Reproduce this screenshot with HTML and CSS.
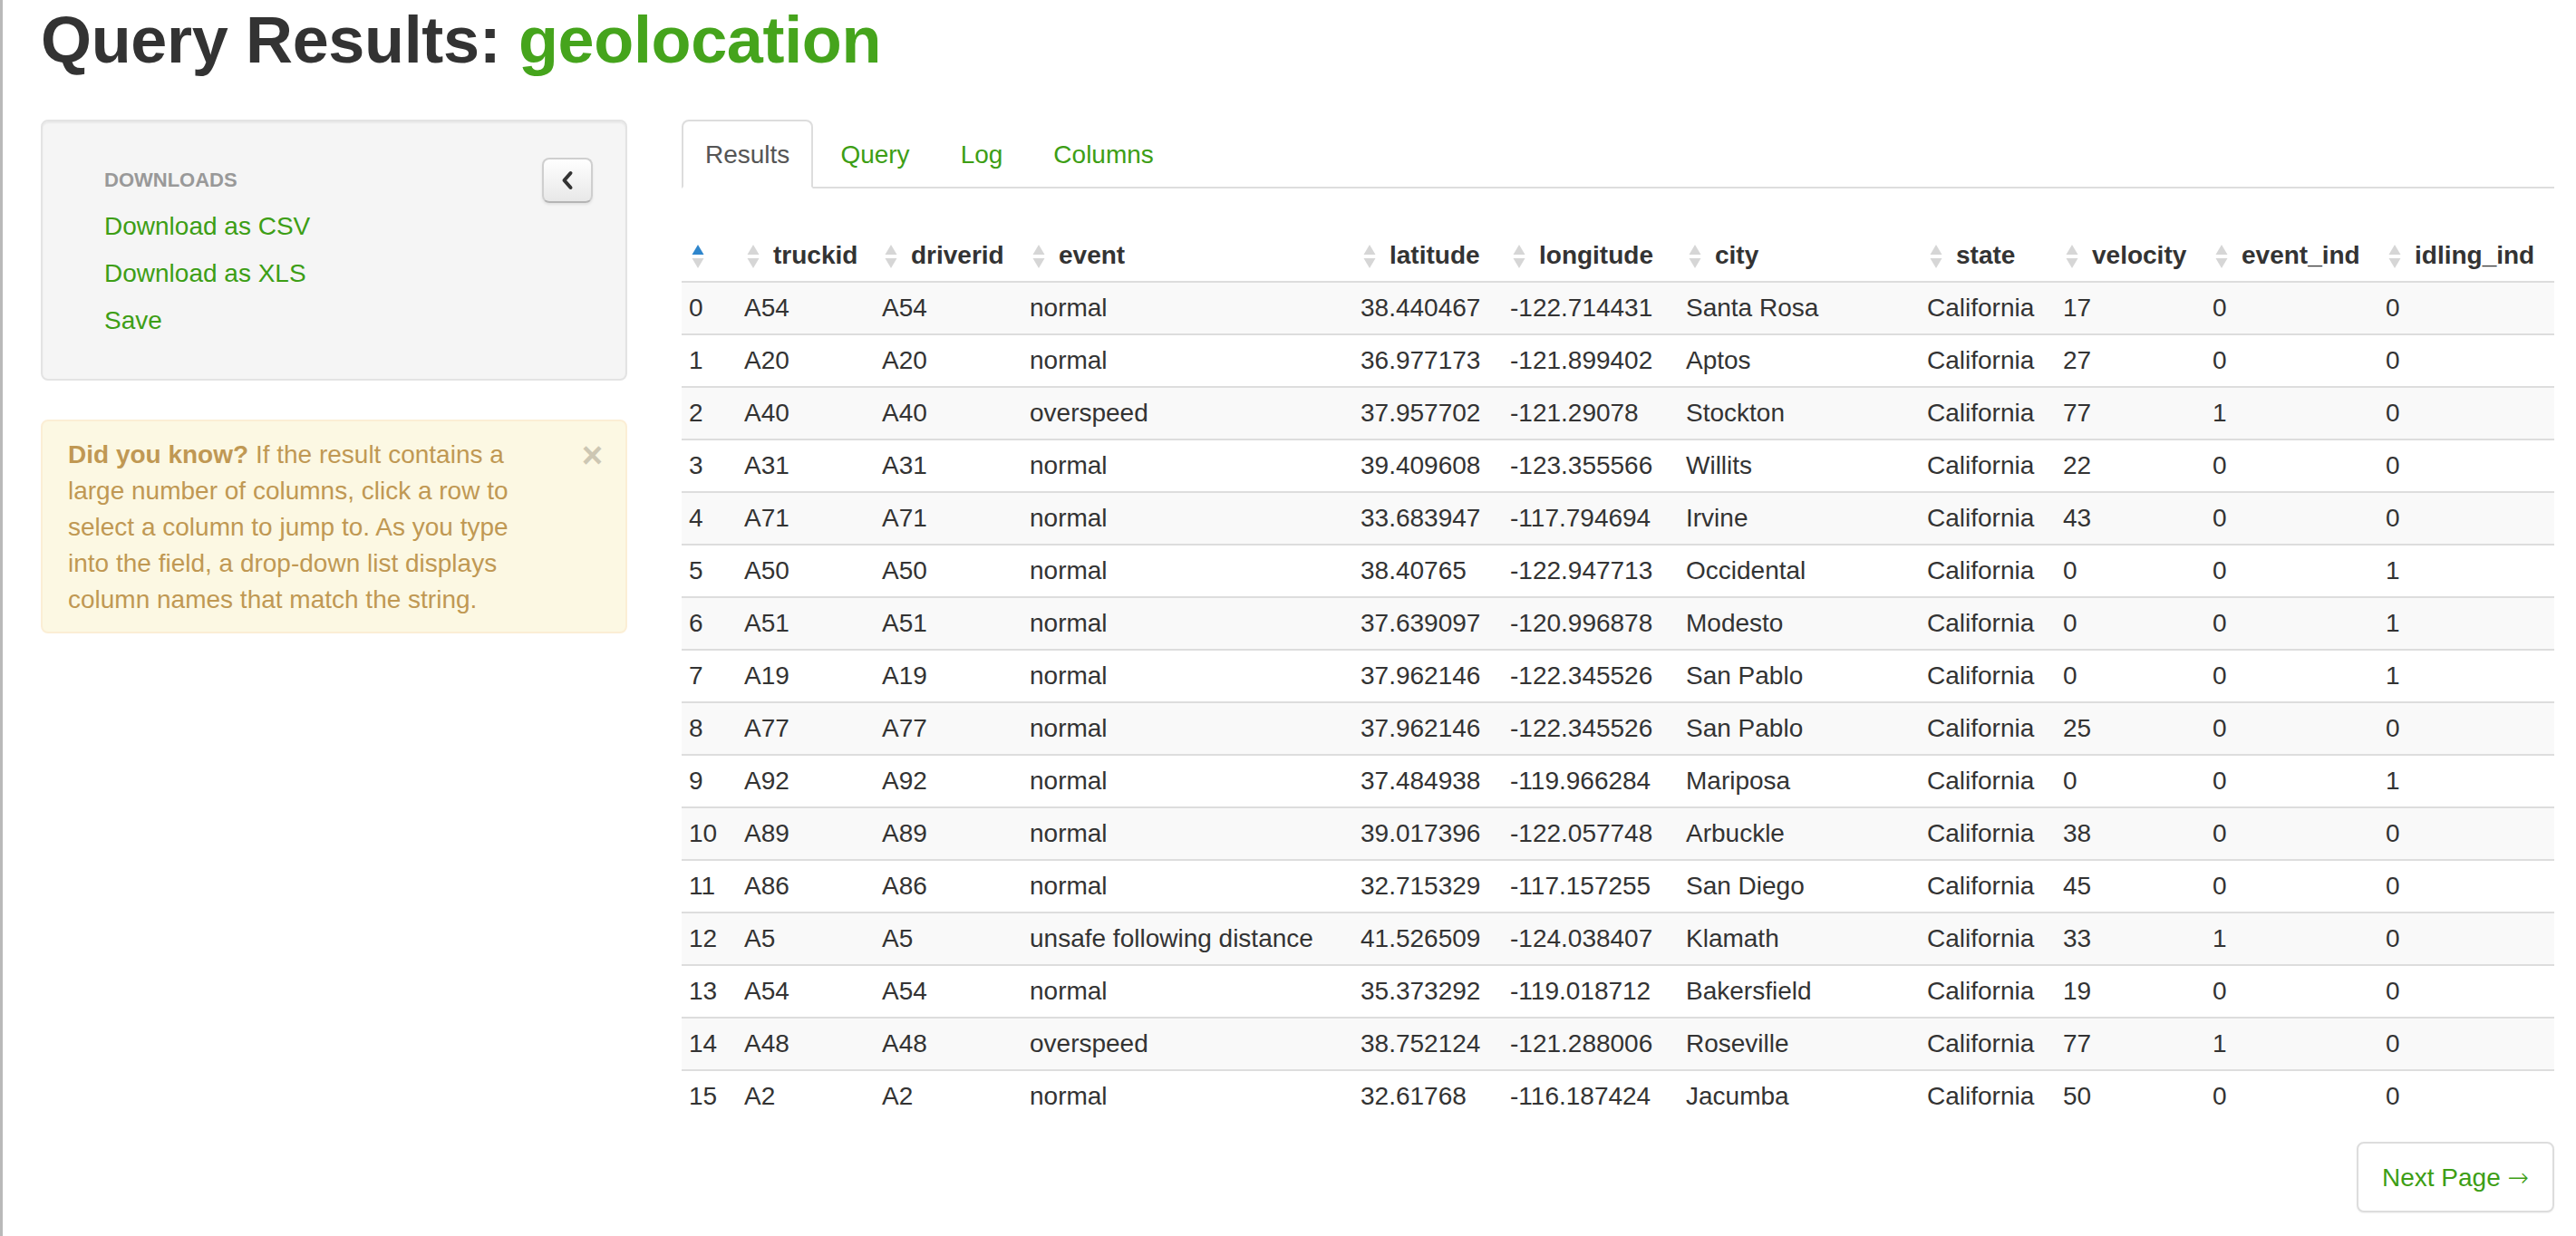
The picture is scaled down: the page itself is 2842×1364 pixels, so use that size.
FILE: index.html
```html
<!DOCTYPE html>
<html>
<head>
<meta charset="utf-8">
<title>Query Results: geolocation</title>
<link rel="stylesheet" href="styles.css">
</head>
<body>
<div class="frame">
  <h1 class="title">Query Results: <span class="title-name">geolocation</span></h1>
  <div class="layout">
    <aside class="sidebar">
      <div class="well">
        <button class="collapse-btn" type="button" aria-label="Collapse">
          <svg width="14" height="22" viewBox="0 0 14 22"><polyline points="10.5,3 3.5,11 10.5,19" fill="none" stroke="#333" stroke-width="4" stroke-linecap="round" stroke-linejoin="round"/></svg>
        </button>
        <div class="nav-header">DOWNLOADS</div>
        <ul class="nav-list">
          <li><a href="#">Download as CSV</a></li>
          <li><a href="#">Download as XLS</a></li>
          <li><a href="#">Save</a></li>
        </ul>
      </div>
      <div class="alert">
        <span class="alert-close">×</span>
        <p class="alert-text"><strong>Did you know?</strong> If the result contains a large number of columns, click a row to select a column to jump to. As you type into the field, a drop-down list displays column names that match the string.</p>
      </div>
    </aside>
    <main class="main">
      <ul class="tabs">
        <li><a class="tab active" href="#">Results</a></li>
        <li><a class="tab" href="#">Query</a></li>
        <li><a class="tab" href="#">Log</a></li>
        <li><a class="tab" href="#">Columns</a></li>
      </ul>
      <table class="results">
        <colgroup>
          <col class="w-idx"><col class="w-truck"><col class="w-driver"><col class="w-event"><col class="w-lat"><col class="w-lon"><col class="w-city"><col class="w-state"><col class="w-vel"><col class="w-evind"><col class="w-idle">
        </colgroup>
        <thead>
          <tr>
            <th><svg class="sort" width="14" height="28" viewBox="0 0 14 28"><polygon points="7,1 13.5,12 0.5,12" fill="#2f86cc"/><polygon points="0.5,16 13.5,16 7,27" fill="#d6d6d6"/></svg></th>
            <th><svg class="sort" width="14" height="28" viewBox="0 0 14 28"><polygon points="7,1 13.5,12 0.5,12" fill="#d6d6d6"/><polygon points="0.5,16 13.5,16 7,27" fill="#d6d6d6"/></svg>truckid</th>
            <th><svg class="sort" width="14" height="28" viewBox="0 0 14 28"><polygon points="7,1 13.5,12 0.5,12" fill="#d6d6d6"/><polygon points="0.5,16 13.5,16 7,27" fill="#d6d6d6"/></svg>driverid</th>
            <th><svg class="sort" width="14" height="28" viewBox="0 0 14 28"><polygon points="7,1 13.5,12 0.5,12" fill="#d6d6d6"/><polygon points="0.5,16 13.5,16 7,27" fill="#d6d6d6"/></svg>event</th>
            <th><svg class="sort" width="14" height="28" viewBox="0 0 14 28"><polygon points="7,1 13.5,12 0.5,12" fill="#d6d6d6"/><polygon points="0.5,16 13.5,16 7,27" fill="#d6d6d6"/></svg>latitude</th>
            <th><svg class="sort" width="14" height="28" viewBox="0 0 14 28"><polygon points="7,1 13.5,12 0.5,12" fill="#d6d6d6"/><polygon points="0.5,16 13.5,16 7,27" fill="#d6d6d6"/></svg>longitude</th>
            <th><svg class="sort" width="14" height="28" viewBox="0 0 14 28"><polygon points="7,1 13.5,12 0.5,12" fill="#d6d6d6"/><polygon points="0.5,16 13.5,16 7,27" fill="#d6d6d6"/></svg>city</th>
            <th><svg class="sort" width="14" height="28" viewBox="0 0 14 28"><polygon points="7,1 13.5,12 0.5,12" fill="#d6d6d6"/><polygon points="0.5,16 13.5,16 7,27" fill="#d6d6d6"/></svg>state</th>
            <th><svg class="sort" width="14" height="28" viewBox="0 0 14 28"><polygon points="7,1 13.5,12 0.5,12" fill="#d6d6d6"/><polygon points="0.5,16 13.5,16 7,27" fill="#d6d6d6"/></svg>velocity</th>
            <th><svg class="sort" width="14" height="28" viewBox="0 0 14 28"><polygon points="7,1 13.5,12 0.5,12" fill="#d6d6d6"/><polygon points="0.5,16 13.5,16 7,27" fill="#d6d6d6"/></svg>event_ind</th>
            <th><svg class="sort" width="14" height="28" viewBox="0 0 14 28"><polygon points="7,1 13.5,12 0.5,12" fill="#d6d6d6"/><polygon points="0.5,16 13.5,16 7,27" fill="#d6d6d6"/></svg>idling_ind</th>
          </tr>
        </thead>
        <tbody>
          <tr><td>0</td><td>A54</td><td>A54</td><td>normal</td><td>38.440467</td><td>-122.714431</td><td>Santa Rosa</td><td>California</td><td>17</td><td>0</td><td>0</td></tr>
          <tr><td>1</td><td>A20</td><td>A20</td><td>normal</td><td>36.977173</td><td>-121.899402</td><td>Aptos</td><td>California</td><td>27</td><td>0</td><td>0</td></tr>
          <tr><td>2</td><td>A40</td><td>A40</td><td>overspeed</td><td>37.957702</td><td>-121.29078</td><td>Stockton</td><td>California</td><td>77</td><td>1</td><td>0</td></tr>
          <tr><td>3</td><td>A31</td><td>A31</td><td>normal</td><td>39.409608</td><td>-123.355566</td><td>Willits</td><td>California</td><td>22</td><td>0</td><td>0</td></tr>
          <tr><td>4</td><td>A71</td><td>A71</td><td>normal</td><td>33.683947</td><td>-117.794694</td><td>Irvine</td><td>California</td><td>43</td><td>0</td><td>0</td></tr>
          <tr><td>5</td><td>A50</td><td>A50</td><td>normal</td><td>38.40765</td><td>-122.947713</td><td>Occidental</td><td>California</td><td>0</td><td>0</td><td>1</td></tr>
          <tr><td>6</td><td>A51</td><td>A51</td><td>normal</td><td>37.639097</td><td>-120.996878</td><td>Modesto</td><td>California</td><td>0</td><td>0</td><td>1</td></tr>
          <tr><td>7</td><td>A19</td><td>A19</td><td>normal</td><td>37.962146</td><td>-122.345526</td><td>San Pablo</td><td>California</td><td>0</td><td>0</td><td>1</td></tr>
          <tr><td>8</td><td>A77</td><td>A77</td><td>normal</td><td>37.962146</td><td>-122.345526</td><td>San Pablo</td><td>California</td><td>25</td><td>0</td><td>0</td></tr>
          <tr><td>9</td><td>A92</td><td>A92</td><td>normal</td><td>37.484938</td><td>-119.966284</td><td>Mariposa</td><td>California</td><td>0</td><td>0</td><td>1</td></tr>
          <tr><td>10</td><td>A89</td><td>A89</td><td>normal</td><td>39.017396</td><td>-122.057748</td><td>Arbuckle</td><td>California</td><td>38</td><td>0</td><td>0</td></tr>
          <tr><td>11</td><td>A86</td><td>A86</td><td>normal</td><td>32.715329</td><td>-117.157255</td><td>San Diego</td><td>California</td><td>45</td><td>0</td><td>0</td></tr>
          <tr><td>12</td><td>A5</td><td>A5</td><td>unsafe following distance</td><td>41.526509</td><td>-124.038407</td><td>Klamath</td><td>California</td><td>33</td><td>1</td><td>0</td></tr>
          <tr><td>13</td><td>A54</td><td>A54</td><td>normal</td><td>35.373292</td><td>-119.018712</td><td>Bakersfield</td><td>California</td><td>19</td><td>0</td><td>0</td></tr>
          <tr><td>14</td><td>A48</td><td>A48</td><td>overspeed</td><td>38.752124</td><td>-121.288006</td><td>Roseville</td><td>California</td><td>77</td><td>1</td><td>0</td></tr>
          <tr><td>15</td><td>A2</td><td>A2</td><td>normal</td><td>32.61768</td><td>-116.187424</td><td>Jacumba</td><td>California</td><td>50</td><td>0</td><td>0</td></tr>
        </tbody>
      </table>
      <div class="pager">
        <a class="pager-btn" href="#">Next Page <span class="arrow">→</span></a>
      </div>
    </main>
  </div>
</div>
</body>
</html>
```

FILE: styles.css
```css
html, body {
  margin: 0;
  padding: 0;
  background: #fff;
}

body {
  font-family: "Liberation Sans", Arial, "Helvetica Neue", sans-serif;
  font-size: 28px;
  line-height: 40px;
  color: #333;
}

a {
  color: #3d9e15;
  text-decoration: none;
}

.frame {
  border-left: 3px solid #b9b9b9;
  min-height: 100vh;
  box-sizing: border-box;
  padding-left: 42px;
  padding-right: 24px;
}

.title {
  margin: 0;
  padding-top: 4px;
  font-size: 72px;
  line-height: 80px;
  font-weight: bold;
  color: #333;
  letter-spacing: -0.35px;
}

.title-name {
  color: #45a41c;
}

.layout {
  display: flex;
  align-items: flex-start;
  gap: 60px;
  margin-top: 48px;
}

.sidebar {
  flex: 0 0 647px;
  width: 647px;
}

.well {
  position: relative;
  background: #f5f5f5;
  border: 2px solid #e3e3e3;
  border-radius: 8px;
  box-shadow: inset 0 2px 2px rgba(0, 0, 0, 0.05);
  padding: 38px 38px;
  margin-bottom: 43px;
}

.collapse-btn {
  position: absolute;
  top: 40px;
  right: 36px;
  width: 56px;
  height: 50px;
  padding: 0;
  border: 2px solid #cfcfcf;
  border-bottom-color: #b5b5b5;
  border-radius: 8px;
  background: linear-gradient(#ffffff, #e8e8e8);
  box-shadow: inset 0 2px 0 rgba(255, 255, 255, 0.3), 0 2px 3px rgba(0, 0, 0, 0.08);
  display: flex;
  align-items: center;
  justify-content: center;
}

.nav-header {
  padding: 7px 30px 5px;
  font-size: 22px;
  line-height: 40px;
  font-weight: bold;
  color: #999;
}

.nav-list {
  list-style: none;
  margin: 0;
  padding: 0;
}

.nav-list a {
  display: block;
  padding: 6px 30px;
  line-height: 40px;
}

.alert {
  position: relative;
  background: #fcf8e3;
  border: 2px solid #fbeed5;
  border-radius: 8px;
  padding: 17px 28px 15px 28px;
  color: #c09853;
  font-size: 28px;
  line-height: 40px;
}

.alert-text {
  margin: 0;
  width: 500px;
}

.alert-close {
  position: absolute;
  top: 17px;
  right: 25px;
  font-size: 40px;
  line-height: 40px;
  font-weight: bold;
  color: #cdc7b3;
}

.main {
  flex: 0 0 2066px;
  width: 2066px;
}

.tabs {
  display: flex;
  list-style: none;
  margin: 0;
  padding: 0;
  border-bottom: 2px solid #ddd;
}

.tabs li {
  margin-bottom: -2px;
  margin-right: 4px;
}

.tab {
  display: block;
  padding: 17px 24px 15px;
  line-height: 40px;
  border: 2px solid transparent;
  border-radius: 8px 8px 0 0;
}

.tab.active {
  color: #555;
  background: #fff;
  border-color: #ddd #ddd transparent #ddd;
}

.results {
  width: 2066px;
  table-layout: fixed;
  border-collapse: collapse;
  margin-top: 46px;
}

.w-idx { width: 61px; }
.w-truck { width: 152px; }
.w-driver { width: 163px; }
.w-event { width: 365px; }
.w-lat { width: 165px; }
.w-lon { width: 194px; }
.w-city { width: 266px; }
.w-state { width: 150px; }
.w-vel { width: 165px; }
.w-evind { width: 191px; }
.w-idle { width: 194px; }

.results th,
.results td {
  padding: 8px 8px;
  line-height: 40px;
  text-align: left;
  white-space: nowrap;
  overflow: hidden;
}

.results th {
  font-weight: bold;
  color: #333;
}

.results td {
  border-top: 2px solid #ddd;
  color: #333;
}

.results tbody tr:nth-child(odd) td {
  background: #f9f9f9;
}

.sort {
  display: inline-block;
  vertical-align: middle;
  margin: -2px 15px 0 3px;
}

.pager {
  display: flex;
  justify-content: flex-end;
  margin-top: 22px;
}

.pager-btn {
  display: block;
  padding: 18px 26px 16px;
  line-height: 40px;
  border: 2px solid #ddd;
  border-radius: 8px;
  background: #fff;
  box-shadow: 0 1px 2px rgba(0, 0, 0, 0.05);
}

.arrow {
  font-family: "DejaVu Sans", sans-serif;
  font-weight: 200;
  font-size: 28px;
}
```
